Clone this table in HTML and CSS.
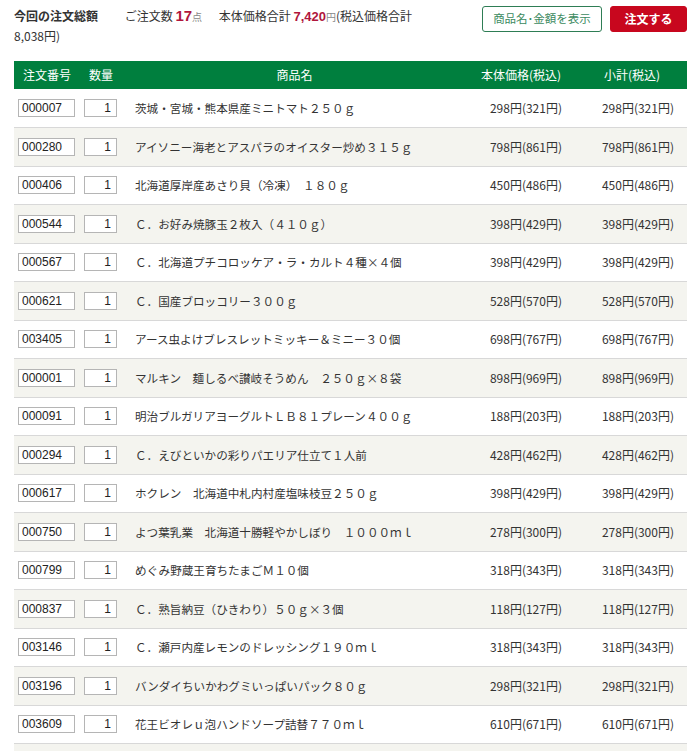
FILE: index.html
```html
<!DOCTYPE html>
<html lang="ja">
<head>
<meta charset="utf-8">
<link rel="stylesheet" href="styles.css">
</head>
<body>
<div class="page">
  <div class="topbar">
    <div class="summary">
      <span class="sum-title">今回の注文総額</span>
      <span class="sum-count">ご注文数 <b class="red big">17</b><small>点</small></span>
      <span class="sum-price">本体価格合計 <b class="red mid">7,420</b><small>円</small>(税込価格合計 <span class="nowrap">8,038円)</span></span>
    </div>
    <div class="actions">
      <button class="btn btn-outline">商品名･金額を表示</button>
      <button class="btn btn-red">注文する</button>
    </div>
  </div>

  <table class="orders">
    <colgroup>
      <col class="c-no"><col class="c-qty"><col class="c-name"><col class="c-price"><col class="c-sub">
    </colgroup>
    <thead>
      <tr>
        <th class="h-no">注文番号</th>
        <th class="h-qty">数量</th>
        <th>商品名</th>
        <th>本体価格(税込)</th>
        <th>小計(税込)</th>
      </tr>
    </thead>
    <tbody>
      <tr><td><span class="inp inp-no">000007</span></td><td><span class="inp inp-qty">1</span></td><td class="name">茨城・宮城・熊本県産ミニトマト２５０ｇ</td><td class="price">298円(321円)</td><td class="sub">298円(321円)</td></tr>
      <tr><td><span class="inp inp-no">000280</span></td><td><span class="inp inp-qty">1</span></td><td class="name">アイソニー海老とアスパラのオイスター炒め３１５ｇ</td><td class="price">798円(861円)</td><td class="sub">798円(861円)</td></tr>
      <tr><td><span class="inp inp-no">000406</span></td><td><span class="inp inp-qty">1</span></td><td class="name">北海道厚岸産あさり貝（冷凍）　１８０ｇ</td><td class="price">450円(486円)</td><td class="sub">450円(486円)</td></tr>
      <tr><td><span class="inp inp-no">000544</span></td><td><span class="inp inp-qty">1</span></td><td class="name">Ｃ．お好み焼豚玉２枚入（４１０ｇ）</td><td class="price">398円(429円)</td><td class="sub">398円(429円)</td></tr>
      <tr><td><span class="inp inp-no">000567</span></td><td><span class="inp inp-qty">1</span></td><td class="name">Ｃ．北海道プチコロッケア・ラ・カルト４種×４個</td><td class="price">398円(429円)</td><td class="sub">398円(429円)</td></tr>
      <tr><td><span class="inp inp-no">000621</span></td><td><span class="inp inp-qty">1</span></td><td class="name">Ｃ．国産ブロッコリー３００ｇ</td><td class="price">528円(570円)</td><td class="sub">528円(570円)</td></tr>
      <tr><td><span class="inp inp-no">003405</span></td><td><span class="inp inp-qty">1</span></td><td class="name">アース虫よけブレスレットミッキー＆ミニー３０個</td><td class="price">698円(767円)</td><td class="sub">698円(767円)</td></tr>
      <tr><td><span class="inp inp-no">000001</span></td><td><span class="inp inp-qty">1</span></td><td class="name">マルキン　麺しるべ讃岐そうめん　２５０ｇ×８袋</td><td class="price">898円(969円)</td><td class="sub">898円(969円)</td></tr>
      <tr><td><span class="inp inp-no">000091</span></td><td><span class="inp inp-qty">1</span></td><td class="name">明治ブルガリアヨーグルトＬＢ８１プレーン４００ｇ</td><td class="price">188円(203円)</td><td class="sub">188円(203円)</td></tr>
      <tr><td><span class="inp inp-no">000294</span></td><td><span class="inp inp-qty">1</span></td><td class="name">Ｃ．えびといかの彩りパエリア仕立て１人前</td><td class="price">428円(462円)</td><td class="sub">428円(462円)</td></tr>
      <tr><td><span class="inp inp-no">000617</span></td><td><span class="inp inp-qty">1</span></td><td class="name">ホクレン　北海道中札内村産塩味枝豆２５０ｇ</td><td class="price">398円(429円)</td><td class="sub">398円(429円)</td></tr>
      <tr><td><span class="inp inp-no">000750</span></td><td><span class="inp inp-qty">1</span></td><td class="name">よつ葉乳業　北海道十勝軽やかしぼり　１０００ｍｌ</td><td class="price">278円(300円)</td><td class="sub">278円(300円)</td></tr>
      <tr><td><span class="inp inp-no">000799</span></td><td><span class="inp inp-qty">1</span></td><td class="name">めぐみ野蔵王育ちたまごＭ１０個</td><td class="price">318円(343円)</td><td class="sub">318円(343円)</td></tr>
      <tr><td><span class="inp inp-no">000837</span></td><td><span class="inp inp-qty">1</span></td><td class="name">Ｃ．熟旨納豆（ひきわり）５０ｇ×３個</td><td class="price">118円(127円)</td><td class="sub">118円(127円)</td></tr>
      <tr><td><span class="inp inp-no">003146</span></td><td><span class="inp inp-qty">1</span></td><td class="name">Ｃ．瀬戸内産レモンのドレッシング１９０ｍｌ</td><td class="price">318円(343円)</td><td class="sub">318円(343円)</td></tr>
      <tr><td><span class="inp inp-no">003196</span></td><td><span class="inp inp-qty">1</span></td><td class="name">バンダイちいかわグミいっぱいパック８０ｇ</td><td class="price">298円(321円)</td><td class="sub">298円(321円)</td></tr>
      <tr><td><span class="inp inp-no">003609</span></td><td><span class="inp inp-qty">1</span></td><td class="name">花王ビオレｕ泡ハンドソープ詰替７７０ｍｌ</td><td class="price">610円(671円)</td><td class="sub">610円(671円)</td></tr>
      <tr><td></td><td></td><td class="name"></td><td class="price"></td><td class="sub"></td></tr>
    </tbody>
  </table>
</div>
</body>
</html>
```

FILE: styles.css
```css
html, body {
  margin: 0;
  padding: 0;
  background: #fff;
}

body {
  font-family: "Noto Sans CJK JP", "Noto Sans", sans-serif;
  font-size: 12px;
  color: #333;
}

.page {
  padding: 6px 10px 0 14px;
}

.topbar {
  display: flex;
  justify-content: space-between;
  align-items: flex-start;
  height: 55px;
}

.summary {
  width: 440px;
  line-height: 20px;
}

.nowrap {
  white-space: nowrap;
}

.sum-title {
  font-weight: bold;
  margin-right: 24px;
}

.sum-count {
  margin-right: 14px;
}

.red {
  color: #b0163c;
  font-family: "Liberation Sans", "Noto Sans", sans-serif;
  line-height: 1;
}

.big {
  font-size: 15px;
}

.mid {
  font-size: 13px;
}

.summary small {
  font-size: 10px;
  color: #888;
  line-height: 1;
}

.actions {
  display: flex;
  gap: 8px;
}

.btn {
  font-family: "Noto Sans CJK JP", sans-serif;
  height: 26px;
  border-radius: 3px;
  padding: 0;
  cursor: pointer;
  font-size: 12px;
  line-height: 1;
}

.btn-outline {
  width: 120px;
  background: #fff;
  border: 1px solid #2e7d55;
  color: #3b8a60;
  font-size: 11.5px;
}

.btn-red {
  width: 77px;
  background: #c8071e;
  border: 1px solid #c8071e;
  color: #fff;
  font-weight: bold;
}

.orders {
  width: 673px;
  border-collapse: collapse;
  table-layout: fixed;
}

.c-no { width: 66px; }
.c-qty { width: 44px; }
.c-name { width: 341px; }
.c-price { width: 112px; }
.c-sub { width: 110px; }

.orders thead tr {
  background: #007f3e;
  height: 28px;
}

.orders th {
  color: #fff;
  font-weight: normal;
  font-size: 12px;
  padding: 0;
  text-align: center;
  line-height: 28px;
}

.orders th.h-no {
  text-align: left;
  padding-left: 9px;
}

.orders th.h-qty {
  text-align: left;
  padding-left: 9px;
}

.orders tbody tr {
  height: 38.5px;
  border-bottom: 1px solid #d8d8d8;
}

.orders tbody tr:nth-child(even) {
  background: #f4f4ef;
}

.orders td {
  padding: 0;
  line-height: 16px;
  white-space: nowrap;
}

.orders td:first-child {
  padding-left: 4px;
}

.orders td:nth-child(2) {
  padding-left: 4px;
}

.inp {
  display: block;
  box-sizing: border-box;
  height: 18px;
  border: 1px solid #b5b5b5;
  background: #fff;
  font-family: "Liberation Sans", Arial, sans-serif;
  font-size: 12px;
  line-height: 16px;
  color: #222;
}

.inp-no {
  width: 57px;
  padding-left: 3px;
}

.inp-qty {
  width: 33px;
  text-align: right;
  padding-right: 5px;
}

.name {
  padding-left: 11px !important;
  font-size: 11.6px;
}

.price {
  text-align: right;
  padding-right: 15px !important;
}

.sub {
  text-align: right;
  padding-right: 13px !important;
}
```
